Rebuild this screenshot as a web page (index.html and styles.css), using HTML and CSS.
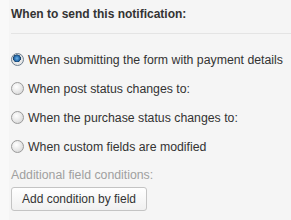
FILE: index.html
```html
<!DOCTYPE html>
<html lang="en">
<head>
    <meta charset="UTF-8">
    <meta name="viewport" content="width=device-width, initial-scale=1.0">
    <title>Notificação</title>
    <link rel="stylesheet" href="styles.css">
</head>

<body>
    <div class="painel">
        <h3 class="titulo">When to send this notification:</h3>

        <div class="opcoes">
            <label class="opcao">
                <input type="radio" name="quando" checked>
                <span>When submitting the form with payment details</span>
            </label>
            <label class="opcao">
                <input type="radio" name="quando">
                <span>When post status changes to:</span>
            </label>
            <label class="opcao">
                <input type="radio" name="quando">
                <span>When the purchase status changes to:</span>
            </label>
            <label class="opcao">
                <input type="radio" name="quando">
                <span>When custom fields are modified</span>
            </label>
        </div>

        <p class="legenda">Additional field conditions:</p>
        <button class="botao">Add condition by field</button>
    </div>
</body>

</html>
```

FILE: styles.css
```css
body {
    margin: 0;
    background-color: #f9f9f9;
    font-family: "Liberation Sans", Arial, sans-serif;
    font-size: 12.3px;
    color: #333;
}

.painel {
    margin-left: 9px;
    padding-left: 2px;
    height: 220px;
    background-color: #f5f5f5;
}

.titulo {
    margin: 0;
    padding: 6px 0 11px;
    font-size: 12px;
    line-height: 16px;
    font-weight: bold;
    color: #333;
    border-bottom: 1px solid #e4e4e4;
}

.opcoes {
    margin-top: 11px;
}

.opcao {
    display: flex;
    align-items: center;
    height: 29px;
    gap: 4px;
    white-space: nowrap;
}

.opcao input {
    appearance: none;
    margin: 0;
    width: 13px;
    height: 13px;
    border-radius: 50%;
    border: 1px solid #9a9a9a;
    background: radial-gradient(circle at 40% 35%, #ffffff 0%, #e6e6e6 55%, #cfcfcf 100%);
    box-sizing: border-box;
}

.opcao input:checked {
    border-color: #6f7f8f;
    background:
        radial-gradient(circle at 45% 40%, #6fb4e8 0%, #2a6fb0 28%, #163f66 42%, transparent 46%),
        radial-gradient(circle, #f4f4f4 0%, #dcdcdc 100%);
}

.legenda {
    margin: 6px 0 0;
    line-height: 16px;
    color: #a0a0a0;
}

.botao {
    margin-top: 4px;
    height: 24px;
    width: 136px;
    padding: 0;
    font-family: "Liberation Sans", Arial, sans-serif;
    font-size: 12px;
    color: #333;
    border: 1px solid #c4c4c4;
    border-radius: 3px;
    background: linear-gradient(#ffffff, #f0f0f0);
}
```
